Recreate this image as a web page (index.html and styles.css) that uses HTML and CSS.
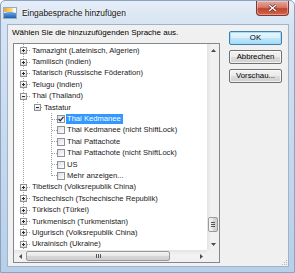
FILE: index.html
```html
<!DOCTYPE html>
<html lang="de">
<head>
<meta charset="utf-8">
<link rel="stylesheet" href="styles.css">
</head>
<body>
<div class="window">
  <div class="titlebar">
    <svg class="appicon" width="14" height="12" viewBox="0 0 14 12">
      <defs>
        <linearGradient id="sky" x1="0" y1="0" x2="1" y2="0">
          <stop offset="0" stop-color="#f3a53a"/>
          <stop offset="1" stop-color="#fbe38a"/>
        </linearGradient>
        <linearGradient id="sea" x1="0" y1="0" x2="0" y2="1">
          <stop offset="0" stop-color="#6fa8e0"/>
          <stop offset="1" stop-color="#1f5fb0"/>
        </linearGradient>
      </defs>
      <rect x="0.5" y="0.5" width="13" height="11" fill="#f7f9fc" stroke="#9aa9bb"/>
      <rect x="1" y="1" width="9" height="4" fill="url(#sky)"/>
      <path d="M1 6 Q7 4 13 6 L13 11 L1 11 Z" fill="url(#sea)"/>
    </svg>
    <span class="title">Eingabesprache hinzufügen</span>
    <div class="close">
      <svg width="9" height="8" viewBox="0 0 9 8"><path d="M1 1 L8 7 M8 1 L1 7" stroke="#5a2018" stroke-width="2.6"/><path d="M1 1 L8 7 M8 1 L1 7" stroke="#fff" stroke-width="1.5"/></svg>
    </div>
  </div>
  <div class="client">
    <div class="main">
      <div class="prompt">Wählen Sie die hinzuzufügenden Sprache aus.</div>
      <div class="listbox">
        <div class="tree">
          <div class="row l0"><span class="exp plus"></span><span class="dash d0"></span><span class="txt">Tamazight (Lateinisch, Algerien)</span></div>
          <div class="row l0"><span class="exp plus"></span><span class="dash d0"></span><span class="txt">Tamilisch (Indien)</span></div>
          <div class="row l0"><span class="exp plus"></span><span class="dash d0"></span><span class="txt">Tatarisch (Russische Föderation)</span></div>
          <div class="row l0"><span class="exp plus"></span><span class="dash d0"></span><span class="txt">Telugu (Indien)</span></div>
          <div class="row l0"><span class="exp"></span><span class="dash d0"></span><span class="txt">Thai (Thailand)</span></div>
          <div class="row l1"><span class="exp"></span><span class="dash d1"></span><span class="txt">Tastatur</span></div>
          <div class="group2">
            <div class="row l2"><span class="dash d2"></span><span class="chk checked"><svg width="6" height="6" viewBox="0 0 6 6"><path d="M0.6 3 L2.3 4.8 L5.5 0.8" fill="none" stroke="#1c2d4a" stroke-width="1.3"/></svg></span><span class="txt sel">Thai Kedmanee</span></div>
            <div class="row l2"><span class="dash d2"></span><span class="chk"></span><span class="txt">Thai Kedmanee (nicht ShiftLock)</span></div>
            <div class="row l2"><span class="dash d2"></span><span class="chk"></span><span class="txt">Thai Pattachote</span></div>
            <div class="row l2"><span class="dash d2"></span><span class="chk"></span><span class="txt">Thai Pattachote (nicht ShiftLock)</span></div>
            <div class="row l2"><span class="dash d2"></span><span class="chk"></span><span class="txt">US</span></div>
            <div class="row l2"><span class="dash d2"></span><span class="chk"></span><span class="txt">Mehr anzeigen...</span></div>
          </div>
          <div class="row l0"><span class="exp plus"></span><span class="dash d0"></span><span class="txt">Tibetisch (Volksrepublik China)</span></div>
          <div class="row l0"><span class="exp plus"></span><span class="dash d0"></span><span class="txt">Tschechisch (Tschechische Republik)</span></div>
          <div class="row l0"><span class="exp plus"></span><span class="dash d0"></span><span class="txt">Türkisch (Türkei)</span></div>
          <div class="row l0"><span class="exp plus"></span><span class="dash d0"></span><span class="txt">Turkmenisch (Turkmenistan)</span></div>
          <div class="row l0"><span class="exp plus"></span><span class="dash d0"></span><span class="txt">Uigurisch (Volksrepublik China)</span></div>
          <div class="row l0"><span class="exp plus"></span><span class="dash d0"></span><span class="txt">Ukrainisch (Ukraine)</span></div>
        </div>
        <div class="vscroll">
          <span class="sbtn"><svg width="5" height="3" viewBox="0 0 5 3"><path d="M0 3 L2.5 0 L5 3 Z" fill="#4a4a4a"/></svg></span>
          <span class="vtrack"><span class="vthumb"><span class="grip-h"></span></span></span>
          <span class="sbtn"><svg width="5" height="3" viewBox="0 0 5 3"><path d="M0 0 L2.5 3 L5 0 Z" fill="#4a4a4a"/></svg></span>
        </div>
        <div class="hscroll">
          <span class="sbtn"><svg width="3" height="5" viewBox="0 0 3 5"><path d="M3 0 L0 2.5 L3 5 Z" fill="#4a4a4a"/></svg></span>
          <span class="htrack"><span class="hthumb"><span class="grip-v"></span></span></span>
          <span class="sbtn"><svg width="3" height="5" viewBox="0 0 3 5"><path d="M0 0 L3 2.5 L0 5 Z" fill="#4a4a4a"/></svg></span>
        </div>
        <div class="corner"></div>
      </div>
    </div>
    <div class="buttons">
      <div class="btn default">OK</div>
      <div class="btn">Abbrechen</div>
      <div class="btn">Vorschau...</div>
    </div>
    <svg class="sizegrip" width="7" height="7" viewBox="0 0 7 7">
      <g fill="#b8b8b8"><rect x="5" y="1" width="1" height="1"/><rect x="3" y="3" width="1" height="1"/><rect x="5" y="3" width="1" height="1"/><rect x="1" y="5" width="1" height="1"/><rect x="3" y="5" width="1" height="1"/><rect x="5" y="5" width="1" height="1"/></g>
    </svg>
  </div>
</div>
</body>
</html>
```

FILE: styles.css
```css
* { box-sizing: border-box; }
html, body { margin: 0; padding: 0; }
body {
  width: 295px;
  height: 273px;
  overflow: hidden;
  background: #fff;
  font-family: "Liberation Sans", Arial, sans-serif;
  font-size: 7.6px;
  color: #000;
}
.window {
  width: 295px;
  height: 273px;
  display: flex;
  flex-direction: column;
  border: 1px solid #8aa3c0;
  border-radius: 5px 5px 0 0;
  background: linear-gradient(#e6eef8 0, #d6e3f2 24px, #c4d7ed 60%, #b8cfe9 100%);
}
.titlebar {
  height: 23px;
  display: flex;
  align-items: flex-start;
  padding-left: 2px;
  flex: none;
}
.appicon { margin-top: 6px; margin-right: 5px; flex: none; }
.title {
  margin-top: 7px;
  font-size: 8.4px;
  line-height: 10px;
  color: #111;
  text-shadow: 0 0 3px #fff;
}
.close {
  margin-left: auto;
  margin-right: 5px;
  width: 33px;
  height: 15px;
  border: 1px solid #7b3a30;
  border-top: none;
  border-radius: 0 0 4px 4px;
  background: linear-gradient(#e8a89b 0, #d57a68 45%, #c2432c 55%, #d26650 100%);
  display: flex;
  align-items: center;
  justify-content: center;
  box-shadow: inset 0 0 0 1px rgba(255,255,255,0.35);
}
.client {
  position: relative;
  flex: 1;
  margin: 0 5px 5px 6px;
  background: #f0f0f0;
  border: 1px solid #9fb3cb;
  display: grid;
  grid-template-columns: 212px 53px;
  column-gap: 9px;
  padding-right: 6px;
}
.main { display: flex; flex-direction: column; }
.prompt {
  padding-left: 4px;
  margin-top: 3px;
  line-height: 10px;
  height: 10px;
  white-space: nowrap;
  font-size: 8px;
}
.listbox {
  margin-top: 5px;
  margin-left: 5px;
  width: 207px;
  height: 220px;
  border: 1px solid #828790;
  background: #fff;
  display: grid;
  grid-template-columns: 193px 12px;
  grid-template-rows: 206px 12px;
}
.tree {
  overflow: hidden;
  padding-top: 1px;
  color: #1a1a1a;
  background: repeating-linear-gradient(to bottom, #a0a0a0 0 1px, transparent 1px 2px) no-repeat 9px 0 / 1px 100%;
}
.row {
  height: 11.4px;
  display: flex;
  align-items: center;
  white-space: nowrap;
}
.l0 { padding-left: 6px; }
.l1 {
  padding-left: 20px;
  background: repeating-linear-gradient(to bottom, #a0a0a0 0 1px, transparent 1px 2px) no-repeat 23px 0 / 1px 3px;
}
.l2 { padding-left: 38px; }
.group2 {
  background: repeating-linear-gradient(to bottom, #a0a0a0 0 1px, transparent 1px 2px) no-repeat 37px 0 / 1px calc(100% - 5px);
}
.exp {
  position: relative;
  width: 7px;
  height: 7px;
  flex: none;
  border: 1px solid #8f9296;
  background: linear-gradient(#ffffff, #dadcdf);
}
.exp::before {
  content: "";
  position: absolute;
  left: 1px; top: 2px;
  width: 3px; height: 1px;
  background: #2b2b2b;
}
.exp.plus::after {
  content: "";
  position: absolute;
  left: 2px; top: 1px;
  width: 1px; height: 3px;
  background: #2b2b2b;
}
.dash {
  height: 1px;
  flex: none;
  background: repeating-linear-gradient(to right, #a0a0a0 0 1px, transparent 1px 2px);
}
.d0 { width: 3px; margin-right: 2px; }
.d1 { width: 2px; margin-right: 1px; }
.d2 { width: 5px; }
.chk {
  width: 8px;
  height: 8px;
  flex: none;
  border: 1px solid #8f9296;
  background: linear-gradient(135deg, #dcdfe3, #ffffff);
  display: flex;
  align-items: center;
  justify-content: center;
}
.l2 .txt { margin-left: 1px; padding: 0 2px 0 1px; }
.txt { line-height: 10px; }
.sel { background: #3399ff; color: #fff; }
.vscroll {
  display: flex;
  flex-direction: column;
  background: linear-gradient(to right, #e4e4e4, #f2f2f2 40%, #f0f0f0 100%);
}
.hscroll {
  display: flex;
  background: linear-gradient(#e4e4e4, #f2f2f2 40%, #f0f0f0 100%);
}
.sbtn {
  width: 12px;
  height: 12px;
  flex: none;
  display: flex;
  align-items: center;
  justify-content: center;
}
.vtrack {
  flex: 1;
  display: flex;
  flex-direction: column;
  justify-content: flex-end;
  padding: 0 1px 6px;
}
.vthumb {
  height: 15px;
  border: 1px solid #9a9a9a;
  border-radius: 2px;
  background: linear-gradient(to right, #f4f4f4, #e6e6e6 50%, #d6d6d6 51%, #cfcfcf);
  display: flex;
  align-items: center;
  justify-content: center;
}
.grip-h {
  width: 4px;
  height: 5px;
  background: repeating-linear-gradient(to bottom, #555 0 1px, transparent 1px 2px);
}
.htrack {
  flex: 1;
  display: flex;
  padding: 1px 0;
}
.hthumb {
  width: 144px;
  border: 1px solid #9a9a9a;
  border-radius: 2px;
  background: linear-gradient(#f4f4f4, #e6e6e6 50%, #d6d6d6 51%, #cfcfcf);
  display: flex;
  align-items: center;
  justify-content: center;
}
.grip-v {
  width: 5px;
  height: 4px;
  background: repeating-linear-gradient(to right, #555 0 1px, transparent 1px 2px);
}
.corner { background: #f0f0f0; }
.buttons {
  display: flex;
  flex-direction: column;
  gap: 5px;
  padding-top: 6px;
}
.btn {
  height: 14px;
  border: 1px solid #707070;
  border-radius: 2px;
  background: linear-gradient(#f2f2f2 0, #ebebeb 50%, #dddddd 51%, #cfcfcf 100%);
  box-shadow: inset 0 0 0 1px rgba(255,255,255,0.7);
  display: flex;
  align-items: center;
  justify-content: center;
  line-height: 10px;
  white-space: nowrap;
  font-size: 7.8px;
}
.btn.default {
  border-color: #3c7fb1;
  background: linear-gradient(#eaf6fd 0, #d9f0fc 50%, #bee6fd 51%, #a7d9f5 100%);
  box-shadow: inset 0 0 0 1px #a6ddf6;
}
.sizegrip {
  position: absolute;
  right: 0;
  bottom: 0;
}
```
